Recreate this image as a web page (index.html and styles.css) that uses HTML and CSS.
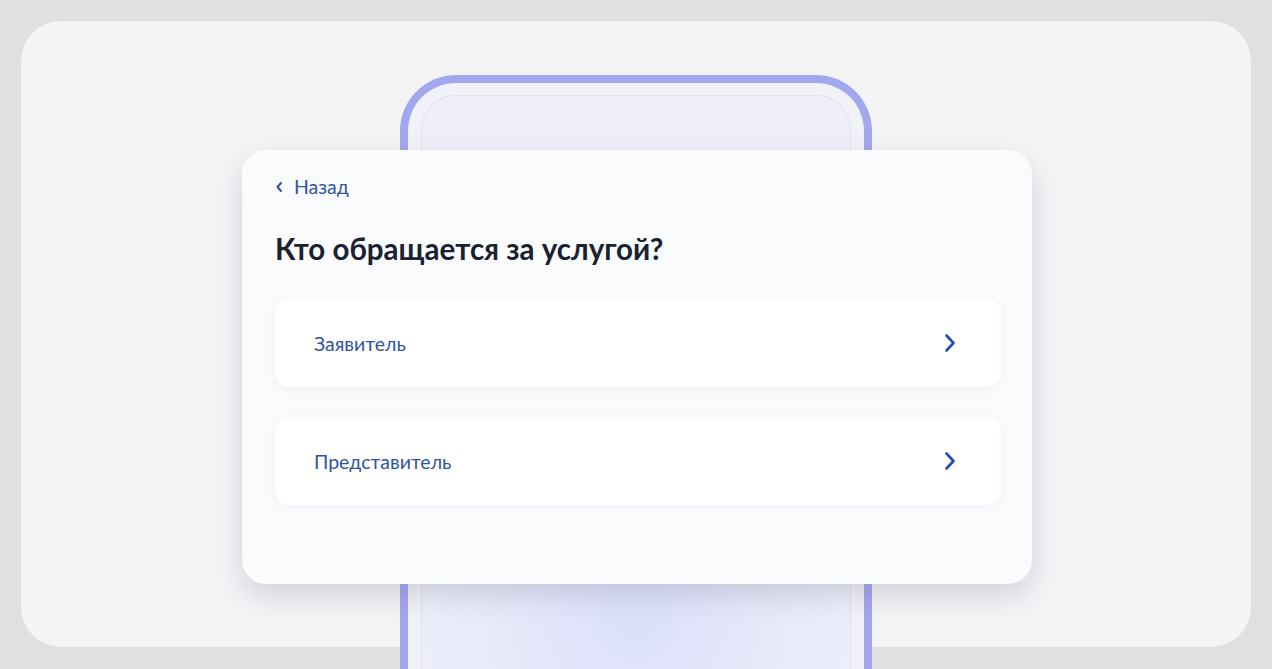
FILE: index.html
```html
<!DOCTYPE html>
<html lang="ru">

<head>
  <meta charset="UTF-8">
  <meta name="viewport" content="width=device-width, initial-scale=1.0">
  <title>Кто обращается за услугой?</title>
  <link rel="stylesheet" href="styles.css">
</head>

<body>
  <div class="stage">
    <div class="phone">
      <div class="phone-screen"></div>
    </div>

    <div class="card">
      <a class="back" href="#">
        <svg width="8" height="12" viewBox="0 0 8 12" fill="none">
          <path d="M6 2 L2.5 6 L6 10" stroke="currentColor" stroke-width="2" stroke-linecap="round" stroke-linejoin="round"/>
        </svg>
        Назад
      </a>

      <h1 class="title">Кто обращается за услугой?</h1>

      <div class="options">
        <a class="option" href="#">
          <span>Заявитель</span>
          <svg width="14" height="20" viewBox="0 0 14 20" fill="none">
            <path d="M3.5 2.5 L10.5 10 L3.5 17.5" stroke="currentColor" stroke-width="2.6" stroke-linecap="round" stroke-linejoin="round"/>
          </svg>
        </a>
        <a class="option" href="#">
          <span>Представитель</span>
          <svg width="14" height="20" viewBox="0 0 14 20" fill="none">
            <path d="M3.5 2.5 L10.5 10 L3.5 17.5" stroke="currentColor" stroke-width="2.6" stroke-linecap="round" stroke-linejoin="round"/>
          </svg>
        </a>
      </div>
    </div>
  </div>
</body>

</html>
```

FILE: styles.css
```css
html,
body {
  margin: 0;
  height: 100%;
}

body {
  font-family: Lato, 'Noto Sans', sans-serif;
  background-color: #e0e0e0;
  overflow: hidden;
}

.stage {
  position: relative;
  margin: 21px;
  height: 626px;
  border-radius: 40px;
  background-color: #f3f4f6;
  display: flex;
  justify-content: center;
  align-items: flex-start;
}

/* decorative phone behind the card, cut by the bottom of the window */
.phone {
  position: absolute;
  left: 50%;
  top: 54px;
  width: 430px;
  height: 574px;
  margin-left: -236px;
  border: 8px solid #a3a8ee;
  border-bottom: 0;
  border-radius: 56px 56px 0 0;
  background-color: #f1f2f7;
  padding: 12px 13px 0;
}

.phone-screen {
  height: 100%;
  border: 1px solid #e2e3ea;
  border-bottom: 0;
  border-radius: 34px 34px 0 0;
  box-sizing: border-box;
  background: radial-gradient(ellipse 240px 200px at 50% 92%, #dcdffb 0%, #e8eafa 60%, #eeeffa 100%);
}

.card {
  position: relative;
  margin: 129px 0 0 2px;
  width: 790px;
  height: 434px;
  box-sizing: border-box;
  padding: 26px 31px 0 33px;
  border-radius: 24px;
  background-color: #fafbfd;
  box-shadow: 0 12px 28px rgba(60, 66, 90, 0.18);
}

.back {
  display: inline-flex;
  align-items: center;
  gap: 11px;
  color: #2f54a3;
  font-size: 19.5px;
  text-decoration: none;
  line-height: 22px;
}

.title {
  margin: 33px 0 32px;
  font-size: 29.5px;
  font-weight: 700;
  color: #19222e;
  line-height: 36px;
}

.options {
  display: flex;
  flex-direction: column;
  gap: 30px;
}

.option {
  display: flex;
  align-items: center;
  justify-content: space-between;
  height: 88px;
  padding: 0 44px 0 39px;
  border-radius: 14px;
  background-color: #ffffff;
  box-shadow: 0 2px 10px rgba(120, 130, 170, 0.07);
  color: #2f54a3;
  font-size: 19.5px;
  text-decoration: none;
}

.option svg {
  color: #1f4db5;
}
```
